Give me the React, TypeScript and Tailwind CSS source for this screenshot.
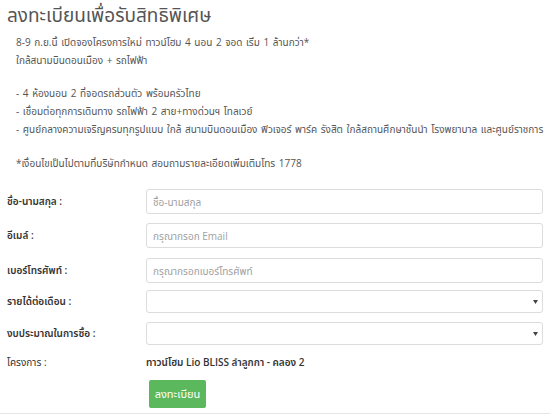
import React from "react";

const Arrow = () => (
  <svg width="5" height="4" viewBox="0 0 5 4" className="absolute right-[4px] top-1/2 -translate-y-1/2">
    <path d="M0 0 L5 0 L2.5 4 Z" fill="#444" />
  </svg>
);

export default function App() {
  const labelCls = "text-[10px] font-semibold text-[#333]";
  const inputCls =
    "w-full h-[25px] border border-[#dcdcdc] rounded-[3px] px-[6px] text-[10px] text-[#555] placeholder:text-[#a0a0a0] outline-none bg-white";
  return (
    <div
      className="w-[550px] h-[414px] bg-white overflow-hidden border-b border-[#e6e6e6] box-border"
      style={{ fontFamily: '"Open Sans", "Noto Sans Thai", sans-serif' }}
    >
      <div className="px-[7px] pt-[3px]">
        <h1 className="text-[19px] leading-[24px] text-[#555] font-normal">ลงทะเบียนเพื่อรับสิทธิพิเศษ</h1>
        <div className="pl-[9px] pt-[6px] text-[10px] leading-[18px] text-[#555] [word-spacing:1px]">
          <p>8-9 ก.ย.นี้ เปิดจองโครงการใหม่ ทาวน์โฮม 4 นอน 2 จอด เริ่ม 1 ล้านกว่า*</p>
          <p>ใกล้สนามบินดอนเมือง + รถไฟฟ้า</p>
          <div className="h-[15px]" />
          <p>- 4 ห้องนอน 2 ที่จอดรถส่วนตัว พร้อมครัวไทย</p>
          <p>- เชื่อมต่อทุกการเดินทาง รถไฟฟ้า 2 สาย+ทางด่วนฯ โทลเวย์</p>
          <p className="whitespace-nowrap">- ศูนย์กลางความเจริญครบทุกรูปแบบ ใกล้ สนามบินดอนเมือง ฟิวเจอร์ พาร์ค รังสิต ใกล้สถานศึกษาชั้นนำ โรงพยาบาล และศูนย์ราชการ</p>
          <div className="h-[16px]" />
          <p>*เงื่อนไขเป็นไปตามที่บริษัทกำหนด สอบถามรายละเอียดเพิ่มเติมโทร 1778</p>
        </div>

        <div className="mt-[17px] grid grid-cols-[139px_1fr] w-[536px] items-center">
          <div className={labelCls}>ชื่อ-นามสกุล :</div>
          <input className={inputCls} placeholder="ชื่อ-นามสกุล" />
          <div className="col-span-2 h-[9px]" />
          <div className={labelCls}>อีเมล์ :</div>
          <input className={inputCls} placeholder="กรุณากรอก Email" />
          <div className="col-span-2 h-[10px]" />
          <div className={labelCls}>เบอร์โทรศัพท์ :</div>
          <input className={inputCls} placeholder="กรุณากรอกเบอร์โทรศัพท์" />
          <div className="col-span-2 h-[7px]" />
          <div className={labelCls}>รายได้ต่อเดือน :</div>
          <div className="relative h-[23px] border border-[#dcdcdc] rounded-[3px] bg-white">
            <Arrow />
          </div>
          <div className="col-span-2 h-[9px]" />
          <div className={labelCls}>งบประมาณในการซื้อ :</div>
          <div className="relative h-[23px] border border-[#dcdcdc] rounded-[3px] bg-white">
            <Arrow />
          </div>
          <div className="col-span-2 h-[10px]" />
          <div className="text-[10px] text-[#333]">โครงการ :</div>
          <div className="text-[10px] font-semibold text-[#333]">ทาวน์โฮม Lio BLISS ลำลูกกา - คลอง 2</div>
          <div className="col-span-2 h-[10px]" />
          <div />
          <div className="pl-[3px]">
            <button className="w-[57px] h-[28px] bg-[#5cb85c] text-white text-[11px] rounded-[2px]">ลงทะเบียน</button>
          </div>
        </div>
      </div>
    </div>
  );
}
